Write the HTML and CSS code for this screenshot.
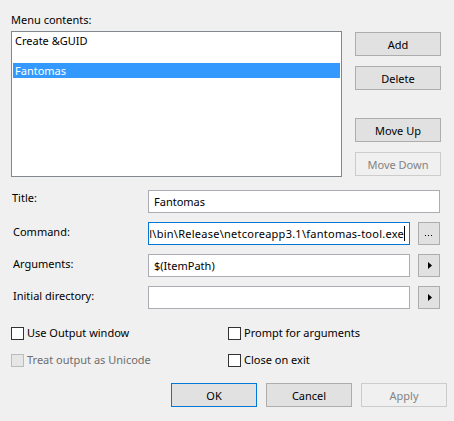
FILE: index.html
```html
<!DOCTYPE html>
<html>
<head>
<meta charset="utf-8">
<link rel="stylesheet" href="styles.css">
</head>
<body>
<div class="dialog">
  <div class="menu-label">Menu contents:</div>
  <div class="top">
    <div class="listbox">
      <div class="item">Create &amp;GUID</div>
      <div class="item"></div>
      <div class="item selected">Fantomas</div>
    </div>
    <div class="side-buttons">
      <div class="btn add">Add</div>
      <div class="btn delete">Delete</div>
      <div class="btn moveup">Move Up</div>
      <div class="btn movedown disabled">Move Down</div>
    </div>
  </div>

  <div class="form">
    <div class="row">
      <div class="label title-label">Title:</div>
      <div class="textbox wide"><span>Fantomas</span></div>
    </div>
    <div class="row">
      <div class="label">Command:</div>
      <div class="textbox focused scrolled"><span>GlobalTool\bin\Release\netcoreapp3.1\fantomas-tool.exe</span><i class="caret"></i></div>
      <div class="mini-btn"><svg width="8" height="2" viewBox="0 0 8 2"><rect x="0" y="0" width="1" height="1" fill="#000"/><rect x="3" y="0" width="1" height="1" fill="#000"/><rect x="6" y="0" width="1" height="1" fill="#000"/></svg></div>
    </div>
    <div class="row">
      <div class="label">Arguments:</div>
      <div class="textbox"><span>$(ItemPath)</span></div>
      <div class="mini-btn arrow"><svg width="4" height="7" viewBox="0 0 4 7"><path d="M0 0 L4 3.5 L0 7 Z" fill="#000"/></svg></div>
    </div>
    <div class="row">
      <div class="label">Initial directory:</div>
      <div class="textbox"><span></span></div>
      <div class="mini-btn arrow"><svg width="4" height="7" viewBox="0 0 4 7"><path d="M0 0 L4 3.5 L0 7 Z" fill="#000"/></svg></div>
    </div>
  </div>

  <div class="checks">
    <label class="check"><span class="box"></span><span class="text">Use Output window</span></label>
    <label class="check"><span class="box"></span><span class="text">Prompt for arguments</span></label>
    <label class="check disabled"><span class="box"></span><span class="text">Treat output as Unicode</span></label>
    <label class="check"><span class="box"></span><span class="text">Close on exit</span></label>
  </div>

  <div class="footer">
    <div class="btn default">OK</div>
    <div class="btn">Cancel</div>
    <div class="btn disabled">Apply</div>
  </div>
</div>
</body>
</html>
```

FILE: styles.css
```css
html, body {
  margin: 0;
  padding: 0;
  background: #f0f0f0;
}
body {
  width: 454px;
  height: 421px;
  overflow: hidden;
  font-family: "Noto Sans", "Open Sans", sans-serif;
  font-size: 11px;
  line-height: 15px;
  color: #000;
}
.dialog {
  padding: 12px 0 0 11px;
}
.menu-label {
  height: 15px;
}
.top {
  display: flex;
  gap: 13px;
  margin-top: 4px;
  align-items: flex-start;
}
.listbox {
  width: 331px;
  height: 146px;
  box-sizing: border-box;
  border: 1px solid #828790;
  background: #fff;
  padding: 1px;
}
.item {
  height: 15px;
  padding-left: 2px;
  line-height: 15px;
}
.item.selected {
  background: #3399ff;
  color: #fff;
}
.side-buttons {
  display: flex;
  flex-direction: column;
  margin-top: 1px;
}
.btn {
  width: 86px;
  height: 24px;
  box-sizing: border-box;
  border: 1px solid #adadad;
  background: #e1e1e1;
  display: flex;
  align-items: center;
  justify-content: center;
}
.btn.disabled {
  border-color: #cccccc;
  background: #f0f0f0;
  color: #838383;
}
.btn.default {
  border-color: #0078d7;
}
.delete { margin-top: 10px; }
.moveup { margin-top: 28px; }
.movedown { margin-top: 10px; }

.form {
  margin-top: 13px;
  display: flex;
  flex-direction: column;
  gap: 9px;
}
.row {
  display: flex;
  align-items: flex-start;
  height: 23px;
}
.label {
  width: 135px;
  padding-left: 2px;
  padding-top: 2px;
}
.label.title-label {
  padding-left: 1px;
  padding-top: 0;
  width: 136px;
}
.textbox {
  width: 262px;
  height: 23px;
  box-sizing: border-box;
  border: 1px solid #abadb3;
  background: #fff;
  display: flex;
  align-items: center;
  padding: 0 4px 0 5px;
  overflow: hidden;
  white-space: nowrap;
}
.textbox.wide {
  width: 292px;
}
.textbox.focused {
  border-color: #0078d7;
  padding-left: 1px;
}
.textbox.scrolled {
  justify-content: flex-end;
}
.textbox.scrolled span {
  flex-shrink: 0;
  letter-spacing: 0.25px;
}
.caret {
  display: block;
  width: 1px;
  height: 15px;
  background: #000;
  flex-shrink: 0;
}
.mini-btn {
  width: 22px;
  height: 23px;
  margin-left: 8px;
  box-sizing: border-box;
  border: 1px solid #adadad;
  background: #e1e1e1;
  display: flex;
  align-items: flex-end;
  justify-content: center;
  padding-bottom: 7px;
}
.mini-btn.arrow {
  align-items: center;
  padding-bottom: 0;
  padding-left: 1px;
}
.mini-btn svg {
  display: block;
}

.checks {
  margin-top: 18px;
  display: grid;
  grid-template-columns: 217px auto;
  row-gap: 14px;
}
.check {
  display: flex;
  align-items: center;
  height: 13px;
}
.box {
  width: 13px;
  height: 13px;
  box-sizing: border-box;
  border: 1px solid #333333;
  background: #fff;
  flex-shrink: 0;
}
.check .text {
  margin-left: 3px;
  margin-top: -2px;
  white-space: nowrap;
}
.check.disabled .box {
  border-color: #bcbcbc;
  background: #e6e6e6;
}
.check.disabled .text {
  color: #6d6d6d;
}

.footer {
  margin-top: 16px;
  display: flex;
  justify-content: flex-end;
  gap: 9px;
  margin-right: 7px;
}
```
